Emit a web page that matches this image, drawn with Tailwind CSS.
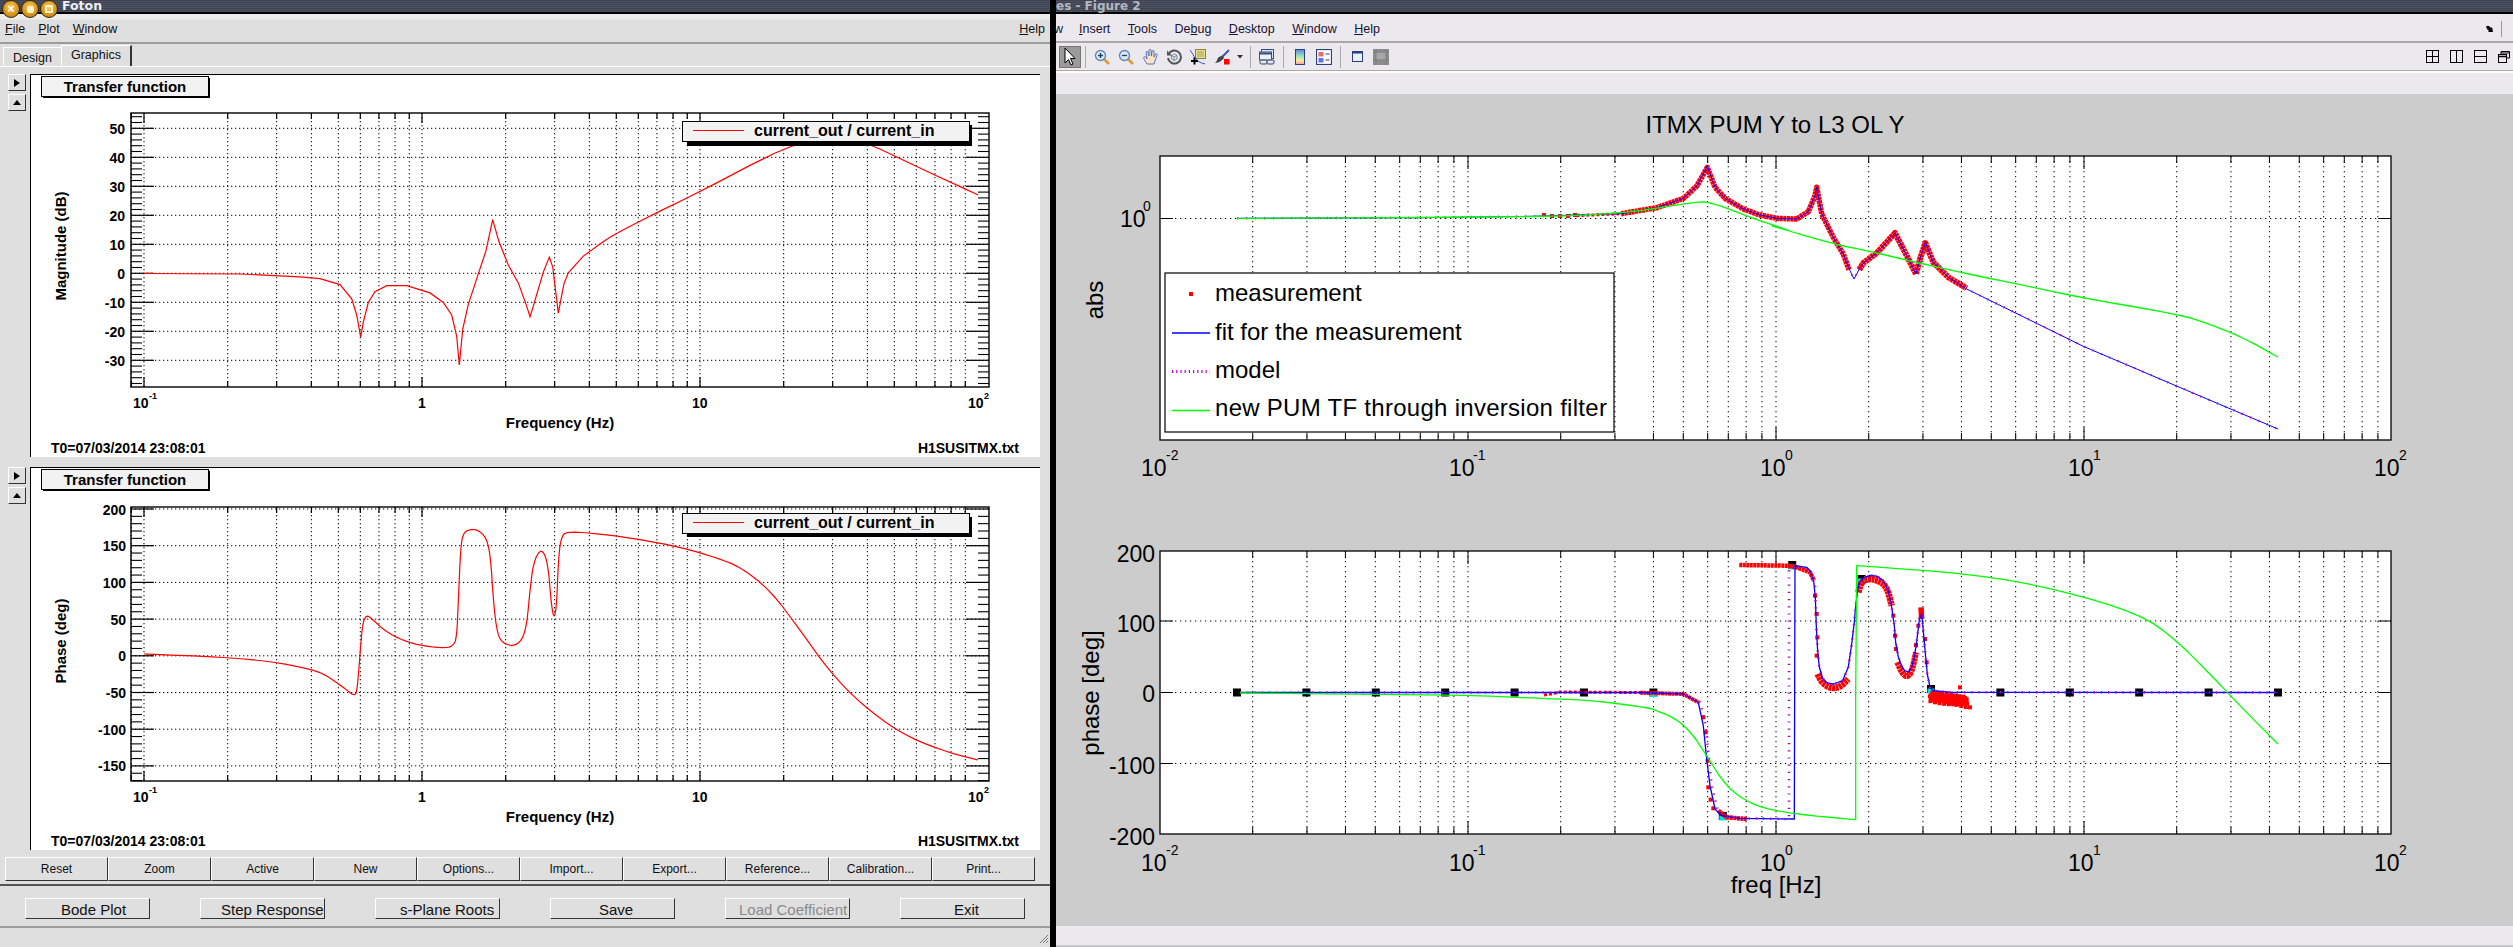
<!DOCTYPE html>
<html lang="en">
<head>
<meta charset="UTF-8">
<title>Foton and Figure 2</title>
<script src="https://cdn.jsdelivr.net/npm/@tailwindcss/browser@4"></script>
</head>
<body class="w-[2513px] h-[947px] overflow-hidden flex bg-black font-['Liberation_Sans',sans-serif] text-[#111]">

<!-- Foton window -->
<div class="w-[1050px] h-[947px] flex flex-col bg-[#dfdfdf] shrink-0">
  <div class="h-[14px] shrink-0 border-b-2 border-black bg-[image:repeating-linear-gradient(0deg,#4d5262_0,#4d5262_1px,#3f4351_1px,#3f4351_2px)] flex items-start relative z-10">
    <div class="flex pl-[2px] gap-[1px]">
      <div class="w-[18px] h-[18px] rounded-full border border-[#3a2a00] bg-[radial-gradient(circle_at_50%_40%,#ffd060,#c98410_75%)] flex items-center justify-center text-white text-[12px] font-bold leading-none">×</div>
      <div class="w-[18px] h-[18px] rounded-full border border-[#3a2a00] bg-[radial-gradient(circle_at_50%_40%,#ffd060,#c98410_75%)] flex items-center justify-center"><div class="w-[7px] h-[7px] bg-[#fff1c8] rounded-[2px]"></div></div>
      <div class="w-[18px] h-[18px] rounded-full border border-[#3a2a00] bg-[radial-gradient(circle_at_50%_40%,#ffd060,#c98410_75%)] flex items-center justify-center"><div class="w-[8px] h-[8px] border-2 border-[#fff1c8]"></div></div>
    </div>
    <span class="ml-[4px] text-[12.5px] leading-[12px] font-bold text-[#eef0f4] font-['DejaVu_Sans',sans-serif]">Foton</span>
  </div>
  <div class="h-[30px] shrink-0 flex items-end justify-between border-b-2 border-[#9c9c9c] bg-[linear-gradient(#ececec_0,#ececec_5px,#dfdfdf_6px)] px-[5px] pb-[3px] text-[12.5px] leading-[20px]">
    <div class="flex gap-[13px]">
      <span><span class="underline">F</span>ile</span>
      <span><span class="underline">P</span>lot</span>
      <span><span class="underline">W</span>indow</span>
    </div>
    <span><span class="underline">H</span>elp</span>
  </div>
  <div class="h-[22px] shrink-0 flex items-end pl-[3px] text-[12.5px]">
    <div class="w-[58px] h-[19px] border-t border-l border-white flex items-center justify-center pt-[2px]">Design</div>
    <div class="w-[71px] h-[21px] border-t border-l border-white border-r-2 border-r-[#333] flex items-center justify-center pb-[2px]">Graphics</div>
  </div>
  <div class="h-[820px] shrink-0 border-t border-white pt-[7px] border-b-2 border-b-[#555]">
    <!-- magnitude pad -->
    <div class="flex h-[383px]">
      <div class="w-[30px] pl-[8px] flex flex-col gap-[3px]">
        <div class="w-[18px] h-[17px] border border-t-white border-l-white border-r-[#333] border-b-[#333] flex items-center justify-center"><svg width="6" height="8"><polygon points="0,0 6,4 0,8" fill="#000"/></svg></div>
        <div class="w-[18px] h-[17px] border border-t-white border-l-white border-r-[#333] border-b-[#333] flex items-center justify-center"><svg width="8" height="6"><polygon points="0,5 8,5 4,0" fill="#000"/></svg></div>
      </div>
      <svg viewBox="30 74 1010 383" class="w-[1010px] h-[383px] block bg-white">
        <g id="gridMag"></g>
        <polyline id="curveMag" fill="none" stroke="#ff0000" stroke-width="1.2"/>
        <polyline points="30,457 30,74 1040,74" fill="none" stroke="#000" stroke-width="2"/>
        <rect x="43" y="78" width="167" height="20" fill="#000"/>
        <rect x="41.5" y="76.5" width="167" height="20" fill="#f2f2f2" stroke="#000"/>
        <g class="text-[15px] font-bold">
          <text x="125" y="92" text-anchor="middle">Transfer function</text>
          <g class="text-[14px]" text-anchor="end">
            <text x="125" y="134">50</text>
            <text x="125" y="163">40</text>
            <text x="125" y="192">30</text>
            <text x="125" y="221">20</text>
            <text x="125" y="250">10</text>
            <text x="125" y="279">0</text>
            <text x="125" y="308">-10</text>
            <text x="125" y="337">-20</text>
            <text x="125" y="366">-30</text>
          </g>
          <g class="text-[14px]">
            <text x="133" y="408">10</text><text x="149" y="399" class="text-[9px]">-1</text>
            <text x="418" y="408">1</text>
            <text x="692" y="408">10</text>
            <text x="968" y="408">10</text><text x="984" y="399" class="text-[9px]">2</text>
          </g>
          <text x="560" y="428" text-anchor="middle">Frequency (Hz)</text>
          <text x="66" y="246" text-anchor="middle" transform="rotate(-90 66 246)">Magnitude (dB)</text>
          <text x="51" y="453" class="text-[14px]">T0=07/03/2014 23:08:01</text>
          <text x="1019" y="453" text-anchor="end" class="text-[14px]">H1SUSITMX.txt</text>
        </g>
        <rect x="687" y="125" width="285" height="21" fill="#000"/>
        <rect x="682.5" y="121.5" width="287" height="20" fill="#f2f2f2" stroke="#000"/>
        <line x1="693" y1="130.5" x2="744" y2="130.5" stroke="#ff0000" stroke-width="1.2"/>
        <text x="754" y="136" class="text-[16px] font-bold">current_out / current_in</text>
      </svg>
    </div>
    <!-- phase pad -->
    <div class="flex h-[383px] mt-[10px]">
      <div class="w-[30px] pl-[8px] flex flex-col gap-[3px]">
        <div class="w-[18px] h-[17px] border border-t-white border-l-white border-r-[#333] border-b-[#333] flex items-center justify-center"><svg width="6" height="8"><polygon points="0,0 6,4 0,8" fill="#000"/></svg></div>
        <div class="w-[18px] h-[17px] border border-t-white border-l-white border-r-[#333] border-b-[#333] flex items-center justify-center"><svg width="8" height="6"><polygon points="0,5 8,5 4,0" fill="#000"/></svg></div>
      </div>
      <svg viewBox="30 467 1010 383" class="w-[1010px] h-[383px] block bg-white">
        <g id="gridPhase"></g>
        <polyline id="curvePhase" fill="none" stroke="#ff0000" stroke-width="1.2"/>
        <polyline points="30,850 30,467 1040,467" fill="none" stroke="#000" stroke-width="2"/>
        <rect x="43" y="471" width="167" height="20" fill="#000"/>
        <rect x="41.5" y="469.5" width="167" height="20" fill="#f2f2f2" stroke="#000"/>
        <g class="text-[15px] font-bold">
          <text x="125" y="485" text-anchor="middle">Transfer function</text>
          <g class="text-[14px]" text-anchor="end">
            <text x="126" y="515">200</text>
            <text x="126" y="551">150</text>
            <text x="126" y="588">100</text>
            <text x="126" y="625">50</text>
            <text x="126" y="661">0</text>
            <text x="126" y="698">-50</text>
            <text x="126" y="735">-100</text>
            <text x="126" y="771">-150</text>
          </g>
          <g class="text-[14px]">
            <text x="133" y="802">10</text><text x="149" y="793" class="text-[9px]">-1</text>
            <text x="418" y="802">1</text>
            <text x="692" y="802">10</text>
            <text x="968" y="802">10</text><text x="984" y="793" class="text-[9px]">2</text>
          </g>
          <text x="560" y="822" text-anchor="middle">Frequency (Hz)</text>
          <text x="66" y="641" text-anchor="middle" transform="rotate(-90 66 641)">Phase (deg)</text>
          <text x="51" y="846" class="text-[14px]">T0=07/03/2014 23:08:01</text>
          <text x="1019" y="846" text-anchor="end" class="text-[14px]">H1SUSITMX.txt</text>
        </g>
        <rect x="687" y="517" width="285" height="20" fill="#000"/>
        <rect x="682.5" y="513.5" width="287" height="20" fill="#f2f2f2" stroke="#000"/>
        <line x1="693" y1="522.5" x2="744" y2="522.5" stroke="#ff0000" stroke-width="1.2"/>
        <text x="754" y="528" class="text-[16px] font-bold">current_out / current_in</text>
      </svg>
    </div>
    <div class="mt-[7px] pl-[5px] flex h-[24px] text-[12px]">
      <button class="w-[103px] border border-t-white border-l-white border-r-[#333] border-b-[#333]">Reset</button>
      <button class="w-[103px] border border-t-white border-l-white border-r-[#333] border-b-[#333]">Zoom</button>
      <button class="w-[103px] border border-t-white border-l-white border-r-[#333] border-b-[#333]">Active</button>
      <button class="w-[103px] border border-t-white border-l-white border-r-[#333] border-b-[#333]">New</button>
      <button class="w-[103px] border border-t-white border-l-white border-r-[#333] border-b-[#333]">Options...</button>
      <button class="w-[103px] border border-t-white border-l-white border-r-[#333] border-b-[#333]">Import...</button>
      <button class="w-[103px] border border-t-white border-l-white border-r-[#333] border-b-[#333]">Export...</button>
      <button class="w-[103px] border border-t-white border-l-white border-r-[#333] border-b-[#333]">Reference...</button>
      <button class="w-[103px] border border-t-white border-l-white border-r-[#333] border-b-[#333]">Calibration...</button>
      <button class="w-[103px] border border-t-white border-l-white border-r-[#333] border-b-[#333]">Print...</button>
    </div>
  </div>
  <div class="h-[40px] shrink-0 pt-[12px] pl-[25px] flex gap-[50px] text-[15px]">
    <button class="w-[125px] h-[21px] whitespace-nowrap text-left pl-[35px] border border-t-white border-l-white border-r-[#333] border-b-[#333]">Bode Plot</button>
    <button class="w-[125px] h-[21px] whitespace-nowrap text-left pl-[20px] border border-t-white border-l-white border-r-[#333] border-b-[#333]">Step Response</button>
    <button class="w-[125px] h-[21px] whitespace-nowrap text-left pl-[24px] border border-t-white border-l-white border-r-[#333] border-b-[#333]">s-Plane Roots</button>
    <button class="w-[125px] h-[21px] whitespace-nowrap text-left pl-[48px] border border-t-white border-l-white border-r-[#333] border-b-[#333]">Save</button>
    <button class="w-[125px] h-[21px] whitespace-nowrap text-left pl-[13px] text-[#8a8a8a] border border-t-white border-l-white border-r-[#333] border-b-[#333]">Load Coefficient</button>
    <button class="w-[125px] h-[21px] whitespace-nowrap text-left pl-[53px] border border-t-white border-l-white border-r-[#333] border-b-[#333]">Exit</button>
  </div>
  <div class="h-[21px] shrink-0 border-t-2 border-[#9c9c9c] flex justify-end items-end pr-[2px] pb-[4px]">
    <svg width="9" height="9" stroke="#777"><path d="M1 9L9 1M4 9L9 4M7 9L9 7"/></svg>
  </div>
</div>

<!-- Figure 2 window -->
<div class="ml-[6px] w-[1457px] h-[947px] flex flex-col bg-[#ebe9ed]">
  <div class="h-[14px] shrink-0 border-b-2 border-black bg-[image:repeating-linear-gradient(0deg,#4d5262_0,#4d5262_1px,#3f4351_1px,#3f4351_2px)]">
    <span class="block text-[12px] leading-[12px] font-bold text-[#b4b8c0] font-['DejaVu_Sans',sans-serif]">es - Figure 2</span>
  </div>
  <div class="h-[29px] shrink-0 flex items-center justify-between border-b-2 border-[#a8a8a8] text-[12.5px] text-[#1a1030] pt-[3px]">
    <div class="flex gap-[17.5px]">
      <span class="ml-[-2px] mr-[-1.5px]">w</span>
      <span><span class="underline">I</span>nsert</span>
      <span><span class="underline">T</span>ools</span>
      <span>De<span class="underline">b</span>ug</span>
      <span><span class="underline">D</span>esktop</span>
      <span><span class="underline">W</span>indow</span>
      <span><span class="underline">H</span>elp</span>
    </div>
    <div class="flex items-center gap-[7px] pr-[1px]">
      <svg width="8" height="8" fill="#000"><path d="M0 1h3l2 2 1-1 1 5H2l1-1-2-2z"/></svg>
      <div class="w-[1px] h-[16px] bg-[#999]"></div>
      <div class="w-[3px]"></div>
    </div>
  </div>
  <div class="h-[28px] shrink-0 flex items-center justify-between border-b border-[#a8a8a8]">
    <div class="flex items-center pl-[3px]">
      <div class="w-[22px] h-[22px] bg-[#9a9a9a] border border-[#777] flex items-center justify-center">
        <svg width="14" height="20" viewBox="0 0 14 20"><path d="M2 1v15l3.5-3.5L8 18l2-1-2.5-5.5H12z" fill="#fff" stroke="#000"/></svg>
      </div>
      <div class="w-[1px] h-[22px] bg-[#aaa] ml-[4px] mr-[8px]"></div>
      <div class="flex items-center gap-2">
        <svg width="16" height="16" viewBox="0 0 16 16"><path d="M10 10l5 5" stroke="#d99c3a" stroke-width="2.6"/><circle cx="6.5" cy="6.5" r="5" fill="#d8e8f6" stroke="#5f83ad" stroke-width="1.3"/><path d="M4 6.5h5M6.5 4v5" stroke="#1d3f77" stroke-width="1.3"/></svg>
        <svg width="16" height="16" viewBox="0 0 16 16"><path d="M10 10l5 5" stroke="#d99c3a" stroke-width="2.6"/><circle cx="6.5" cy="6.5" r="5" fill="#d8e8f6" stroke="#5f83ad" stroke-width="1.3"/><path d="M4 6.5h5" stroke="#1d3f77" stroke-width="1.3"/></svg>
        <svg width="16" height="17" viewBox="0 0 16 17"><path d="M5 16C3 13 1 10 2 9c1-1 2 0 3 2L4 4.500C4 3 6 3 6 4.500L7 8 7 2.500C7 1 9 1 9 2.500L9.500 8 10 3.500C10 2 12 2 12 3.500L12 9 13.500 6C14.500 5 15.500 6 15 7.500L13 13l-1 3z" fill="#fae0c6" stroke="#4668b8" stroke-width="0.9"/></svg>
        <svg width="16" height="16" viewBox="0 0 16 16"><path d="M3 4.500A6.500 6.500 0 1 1 2 9" fill="none" stroke="#555" stroke-width="2"/><path d="M1 1.500v5h5z" fill="#555"/><path d="M5.500 6.500l3-1.500 2.500 1.500v3.500l-3 1.500-2.500-1.500zM8 8v3.500M5.500 6.500L8 8l3-1.500" fill="#e8eef8" stroke="#5a7090" stroke-width="0.8"/></svg>
        <svg width="16" height="16" viewBox="0 0 16 16"><path d="M0 1C4 6 5 13 15 15" fill="none" stroke="#2a3fc0" stroke-width="0.9"/><rect x="5.500" y="0.500" width="10" height="9" fill="#e6de8a" stroke="#8a8244"/><path d="M7 3h7M7 5h7M7 7h7" stroke="#a89f55"/><path d="M4.500 8.500v7M1 12h7" stroke="#000" stroke-width="2"/></svg>
        <svg width="16" height="16" viewBox="0 0 16 16"><path d="M15 1L8 8" stroke="#3f52c8" stroke-width="2"/><path d="M8 6.500l2 2C9 11 5 14 1 14c1.500-1 2-3 3-5 1-1.500 3-2 4-2.500z" fill="#444"/><rect x="10" y="10" width="5.500" height="5.500" fill="#ff0000"/></svg>
      </div>
      <svg width="6" height="4" class="ml-[7px]"><polygon points="0,0 6,0 3,3.500" fill="#333"/></svg>
      <div class="w-[1px] h-[22px] bg-[#aaa] ml-[7px] mr-[8px]"></div>
      <svg width="16" height="16" viewBox="0 0 16 16"><rect x="2.500" y="0.500" width="12" height="9" fill="#dfe4f2" stroke="#34507f"/><rect x="0.500" y="3" width="12" height="8" fill="#eef0f8" stroke="#34507f"/><path d="M1 4.500h11" stroke="#34507f" stroke-width="2"/><rect x="1" y="11" width="7" height="4" rx="2" fill="none" stroke="#6c7a94" stroke-width="1.4"/><rect x="8" y="11" width="7" height="4" rx="2" fill="none" stroke="#6c7a94" stroke-width="1.4"/></svg>
      <div class="w-[1px] h-[22px] bg-[#aaa] ml-[8px] mr-[11px]"></div>
      <svg width="10" height="16" viewBox="0 0 10 16"><defs><linearGradient id="cbar" x1="0" y1="0" x2="0" y2="1"><stop offset="0" stop-color="#5f86dc"/><stop offset="0.4" stop-color="#8fdcc0"/><stop offset="0.7" stop-color="#f4ee9a"/><stop offset="1" stop-color="#f0a0a8"/></linearGradient></defs><rect x="0.500" y="0.500" width="9" height="15" fill="url(#cbar)" stroke="#2b3f80"/></svg>
      <svg width="16" height="16" viewBox="0 0 16 16" class="ml-[11px]"><rect x="0.500" y="0.500" width="15" height="15" fill="#fff" stroke="#2b3f80" stroke-width="1.2"/><rect x="2.500" y="3" width="5" height="4.500" fill="#e86a6a"/><rect x="2.500" y="9" width="5" height="4.500" fill="#6470e4"/><path d="M9.500 5h4M9.500 11h4" stroke="#2b3f80" stroke-width="1.2"/></svg>
      <div class="w-[1px] h-[22px] bg-[#aaa] ml-[8px] mr-[11px]"></div>
      <svg width="11" height="11" viewBox="0 0 11 11"><rect x="0.500" y="0.500" width="10" height="10" fill="#eaf0fa" stroke="#2b3f80"/><path d="M0 1.500h11" stroke="#2b3f80" stroke-width="2"/></svg>
      <svg width="16" height="16" viewBox="0 0 16 16" class="ml-[10px]"><rect x="0" y="0" width="16" height="16" fill="#8c8c8c"/><rect x="3" y="3" width="10" height="8" fill="#a6a6a6"/><path d="M0 3h16M0 11h16M3 0v16M13 0v16" stroke="#7c7c7c"/></svg>
    </div>
    <div class="flex items-center gap-[11px] pr-[3px]">
      <svg width="13" height="13" fill="none" stroke="#000"><rect x="0.500" y="0.500" width="12" height="12"/><path d="M6.500 0v13M0 6.500h13"/></svg>
      <svg width="13" height="13" fill="none" stroke="#000"><rect x="0.500" y="0.500" width="12" height="12"/><path d="M6.500 0v13"/></svg>
      <svg width="13" height="13" fill="none" stroke="#000"><rect x="0.500" y="0.500" width="12" height="12"/><path d="M0 6.500h13"/></svg>
      <svg width="12" height="12" fill="none" stroke="#000"><path d="M3 3V.5h8.500V7H9" /><path d="M3 2h8" /><rect x="0.500" y="3.500" width="8" height="8"/><path d="M0 5.500h9" stroke-width="1.500"/></svg>
    </div>
  </div>
  <div class="h-[2px] shrink-0 bg-white border-b border-[#fff]"></div>
  <div class="h-[21px] shrink-0"></div>
  <svg viewBox="1056 95 1457 832" class="w-[1457px] h-[832px] block shrink-0 bg-[#cccccc]">
    <rect x="1160" y="157" width="1231" height="284" fill="#fff"/>
    <rect x="1160" y="552" width="1231" height="283" fill="#fff"/>
    <g id="gridFig"></g>
    <g id="squares"></g>
    <g id="curvesFig"></g>
    <g fill="none" stroke="#000" stroke-width="1.300">
      <rect x="1160" y="157" width="1231" height="284"/>
      <rect x="1160" y="552" width="1231" height="283"/>
    </g>
    <rect x="1165" y="274" width="449" height="159" fill="#fff" stroke="#000" stroke-width="1.200"/>
    <rect x="1189" y="293" width="4" height="4" fill="#ff0000"/>
    <line x1="1172" y1="334" x2="1210" y2="334" stroke="#0000ff" stroke-width="1.300"/>
    <line x1="1172" y1="372.500" x2="1210" y2="372.500" stroke="#c000c0" stroke-width="3" stroke-dasharray="1.200 3"/>
    <line x1="1172" y1="411.500" x2="1210" y2="411.500" stroke="#00ff00" stroke-width="1.300"/>
    <g class="text-[24px]">
      <text x="1215" y="302">measurement</text>
      <text x="1215" y="341">fit for the measurement</text>
      <text x="1215" y="379">model</text>
      <text x="1215" y="417" class="tracking-[0.28px]">new PUM TF through inversion filter</text>
      <text x="1775" y="134" text-anchor="middle">ITMX PUM Y to L3 OL Y</text>
      <text x="1776" y="894" text-anchor="middle">freq [Hz]</text>
      <text x="1103" y="301" text-anchor="middle" transform="rotate(-90 1103 301)">abs</text>
      <text x="1099" y="694" text-anchor="middle" transform="rotate(-90 1099 694)">phase [deg]</text>
      <g class="text-[23px]">
        <g text-anchor="end">
          <text x="1155" y="563">200</text>
          <text x="1155" y="633">100</text>
          <text x="1155" y="703">0</text>
          <text x="1155" y="775">-100</text>
          <text x="1155" y="846">-200</text>
        </g>
        <text x="1120" y="228">10</text><text x="1143" y="212" class="text-[14px]">0</text>
        <text x="1141" y="477">10</text><text x="1166" y="461" class="text-[14px]">-2</text>
        <text x="1449" y="477">10</text><text x="1473" y="461" class="text-[14px]">-1</text>
        <text x="1760" y="477">10</text><text x="1785" y="461" class="text-[14px]">0</text>
        <text x="2068" y="477">10</text><text x="2093" y="461" class="text-[14px]">1</text>
        <text x="2374" y="477">10</text><text x="2399" y="461" class="text-[14px]">2</text>
        <text x="1141" y="872">10</text><text x="1166" y="856" class="text-[14px]">-2</text>
        <text x="1449" y="872">10</text><text x="1473" y="856" class="text-[14px]">-1</text>
        <text x="1760" y="872">10</text><text x="1785" y="856" class="text-[14px]">0</text>
        <text x="2068" y="872">10</text><text x="2093" y="856" class="text-[14px]">1</text>
        <text x="2374" y="872">10</text><text x="2399" y="856" class="text-[14px]">2</text>
      </g>
    </g>
  </svg>
  <div class="flex-1 border-b-2 border-[#c8c8c8]"></div>
</div>

<script>
const NS = 'http://www.w3.org/2000/svg';

function add(parent, tag, attrs) {
  const el = document.createElementNS(NS, tag);
  for (const k in attrs) el.setAttribute(k, attrs[k]);
  parent.appendChild(el);
  return el;
}
function ln(g, x1, y1, x2, y2, extra) {
  add(g, 'line', Object.assign({ x1, y1, x2, y2, stroke: '#000', 'stroke-width': 1 }, extra || {}));
}
const toPts = a => a.map(p => p[0].toFixed(1) + ',' + p[1].toFixed(1)).join(' ');
function poly(g, pts, stroke, width, extra) {
  add(g, 'polyline', Object.assign({
    points: toPts(pts), fill: 'none', stroke, 'stroke-width': width, 'stroke-linejoin': 'round'
  }, extra || {}));
}
// corner cutting, the traced points are coarse
function smooth(p, n) {
  for (; n > 0; n--) {
    const o = [p[0]];
    for (let i = 0; i < p.length - 1; i++) {
      o.push([0.75 * p[i][0] + 0.25 * p[i + 1][0], 0.75 * p[i][1] + 0.25 * p[i + 1][1]]);
      o.push([0.25 * p[i][0] + 0.75 * p[i + 1][0], 0.25 * p[i][1] + 0.75 * p[i + 1][1]]);
    }
    o.push(p[p.length - 1]);
    p = o;
  }
  return p;
}
const DOT = { 'stroke-dasharray': '1.3 2.7' };

// Foton pads: log x axis with ticks on both sides
function fotonGrid(g, top, bottom, yTop, yStep, yCount) {
  const L = 131, R = 989;
  add(g, 'rect', { x: L, y: top, width: R - L, height: bottom - top, fill: 'none', stroke: '#000', 'stroke-width': 1.4 });
  for (let d = -2; d < 2; d++) {
    for (let m = 1; m < 10; m++) {
      const x = 144 + 278 * (d + 1 + Math.log10(m));
      if (x < L || x > R) continue;
      ln(g, x, top, x, bottom, DOT);
      const len = m === 1 ? 10 : 6;
      ln(g, x, top, x, top + len, { 'stroke-width': 1.2 });
      ln(g, x, bottom, x, bottom - len, { 'stroke-width': 1.2 });
    }
  }
  for (let i = -1; i < yCount + 1; i++) {
    const y = yTop + i * yStep;
    if (y > top && y < bottom) {
      ln(g, L, y, R, y, DOT);
      ln(g, L, y, L + 23, y, { 'stroke-width': 1.2 });
      ln(g, R, y, R - 23, y, { 'stroke-width': 1.2 });
    }
    for (let k = 1; k < 5; k++) {
      const ym = y + k * yStep / 5;
      if (ym <= top || ym >= bottom) continue;
      ln(g, L, ym, L + 11, ym, { 'stroke-width': 1.1 });
      ln(g, R, ym, R - 11, ym, { 'stroke-width': 1.1 });
    }
  }
}
fotonGrid(document.getElementById('gridMag'), 113, 387, 128.3, 29, 9);
fotonGrid(document.getElementById('gridPhase'), 507, 781, 509, 36.7, 8);

const z12 = a => a.map(p => [300 + p[0] / 3, 190 + p[1] / 2.8]);
const z11 = a => a.map(p => [600 + p[0] / 3, 90 + p[1] / 3]);

document.getElementById('curveMag').setAttribute('points', toPts([[144, 273.5], [240, 274]].concat(
  z12([[0,243],[60,248],[120,265],[155,305],[170,350],[182,412],[190,370],[205,315],[225,285],[260,268],[320,268],[390,288],[430,315],[455,350],[470,410],[478,490],[488,390],[505,320],[535,235],[558,170],[578,83],[597,145],[625,210],[655,260],[680,325],[690,355],[700,325],[730,230],[748,188],[758,215],[775,345],[792,262],[805,232],[850,185]]),
  smooth(z11([[0,462],[40,435],[150,378],[300,305],[500,200],[595,160],[700,130],[805,160],[950,230],[1135,315]]), 1)
)));
document.getElementById('curvePhase').setAttribute('points', toPts(smooth([[144, 654], [200, 656], [260, 660]].concat(
  z12([[0,1335],[60,1350],[100,1372],[140,1400],[165,1418],[172,1395],[180,1300],[188,1210],[200,1190],[215,1200],[255,1235],[310,1262],[370,1277],[440,1283],[460,1275],[470,1255],[475,1150],[482,1000],[490,960],[510,950],[535,952],[560,975],[572,1030],[580,1150],[592,1245],[610,1270],[640,1277],[665,1262],[680,1220],[690,1120],[700,1045],[720,1007],[735,1020],[745,1060],[755,1170],[763,1200],[770,1160],[776,1020],[785,970],[800,957],[870,960],[1000,975],[1150,1002],[1250,1030],[1320,1055]]),
  [[770,590],[800,630],[830,672],[860,703],[900,733],[940,750],[978,760]]
), 2)));

// Figure axes
const gf = document.getElementById('gridFig');
[[157, 441], [552, 835]].forEach(([top, bottom]) => {
  for (let d = -2; d < 2; d++) {
    for (let m = 1; m < 10; m++) {
      const x = 1160 + 308 * (d + 2 + Math.log10(m));
      if (m === 1 && d === -2) continue;
      ln(gf, x, top, x, bottom, { 'stroke-dasharray': '1.3 3.7' });
      const len = m === 1 ? 13 : 7;
      ln(gf, x, top, x, top + len);
      ln(gf, x, bottom, x, bottom - len);
    }
  }
});
[219.5, 622, 693.5, 764.5].forEach(y => {
  ln(gf, 1160, y, 2391, y, { 'stroke-dasharray': '1.3 3.7' });
  ln(gf, 1160, y, 1173, y);
  ln(gf, 2391, y, 2378, y);
});

const sq = document.getElementById('squares');
for (let i = 0; i < 16; i++) {
  const x = 1237 + i * 69.4;
  let y = 693.5, cyan = false;
  if (i === 6) cyan = true;
  if (i === 7) { y = 817; cyan = true; }
  if (i === 8) { y = 566; cyan = true; }
  if (i === 9) { y = 580; cyan = true; }
  if (i === 10) { y = 690; cyan = true; }
  add(sq, 'rect', { x: x - 4, y: y - 4, width: 8, height: 8, fill: '#000' });
  if (cyan) add(sq, 'rect', { x: x - 3.5, y: y - 0.5, width: 7, height: 5, fill: '#00e0e0' });
}

const z7 = a => a.map(p => [1130 + p[0] / 2.24, 130 + p[1] / 3]);
const z8 = a => a.map(p => [1700 + p[0] / 3, 140 + p[1] / 3]);
const z9 = a => a.map(p => [1640 + p[0] / 3, 540 + p[1] / 3]);
const cf = document.getElementById('curvesFig');
const RED = { 'stroke-dasharray': '3 0.5' };
const MAG = { 'stroke-dasharray': '1 8' };
const redDot = p => add(cf, 'rect', { x: p[0] - 2, y: p[1] - 2, width: 4, height: 4, fill: '#ff0000' });

// upper axes: measurement, fit, model, inversion filter
const absTail = [[2083.3, 347.3], [2200, 397], [2278, 430]];
const absFit = z7([[240,268],[650,266],[900,262],[1100,254],[1180,236],[1240,208],[1270,170]]).concat(
  z8([[22,80],[45,145],[75,178],[130,210],[180,228],[230,238],[290,240],[325,218],[345,170],[350,145],[365,225],[400,295],[430,345],[450,395],[462,420],[478,390],[490,372],[530,342],[585,282],[620,350],[648,405],[660,360],[676,310],[700,370],[745,415],[800,450]]),
  absTail
);
poly(cf, z7([[1000,260],[1100,254]]), '#ff0000', 3, { 'stroke-dasharray': '3 2' });
poly(cf, z7([[1100,254],[1180,236],[1240,208],[1270,170]]).concat(z8([[22,85],[45,145],[75,178],[130,210],[180,228],[230,238],[290,240],[325,218],[345,170],[350,145],[365,225],[400,295],[430,345],[447,392]])), '#ff0000', 5.5, RED);
poly(cf, z8([[478,392],[490,372],[530,342],[585,282],[620,350],[648,405],[660,360],[676,312],[700,370],[745,415],[800,448]]), '#ff0000', 6, RED);
[[1544,216],[1552,217],[1560,217],[1568,217],[1575,216]].forEach(redDot);
poly(cf, absFit, '#0000ff', 1);
poly(cf, absFit, '#c000c0', 2.4, MAG);
poly(cf, smooth(z7([[240,268],[900,264],[1100,254],[1240,225],[1270,219],[1300,219],[1400,270],[1500,315]]).concat(
  z8([[180,250],[400,315],[500,335],[650,370],[780,400],[1000,445],[1150,477],[1427,525],[1500,545]]),
  [[2240, 337], [2278, 358]]
), 2), '#00ff00', 1.3);

// lower axes
const fitLow = [[1240, 693.5], [1640, 693.5]];
const phaseUp = [[510,95],[525,140],[530,300],[540,410],[570,440],[620,420],[640,280],[650,170],[660,120],[700,105],[740,130],[760,230],[770,340],[790,395],[810,400],[825,350],[843,200],[852,300],[865,440],[885,460],[1080,460]];
poly(cf, [[1544, 696], [1551, 695], [1560, 693], [1640, 693.5]], '#ff0000', 3, { 'stroke-dasharray': '3 2' });
poly(cf, z9([[0,461],[130,465],[175,490]]), '#ff0000', 4, RED);
poly(cf, z9([[298,78],[445,80],[470,85],[510,100],[522,125]]), '#ff0000', 4.5, RED);
poly(cf, smooth(z9([[533,405],[545,430],[570,448],[600,445],[625,420]]), 2), '#ff0000', 6.5, RED);
poly(cf, smooth(z9([[655,160],[665,125],[700,118],[740,140],[755,200]]), 2), '#ff0000', 6.5, RED);
poly(cf, smooth(z9([[772,370],[785,400],[800,415],[815,400],[828,340]]), 2), '#ff0000', 6, RED);
poly(cf, z9([[843,205],[845,240]]), '#ff0000', 5.5);
poly(cf, z9([[235,815],[260,835],[320,840]]), '#ff0000', 4.5, RED);
z9([[190,535],[197,580],[203,665],[205,745],[212,782],[220,808],[525,170],[530,225],[532,295],[530,350],[760,230],[765,290],[768,330],[828,318],[835,260],[855,300],[860,370],[960,445],[990,505]]).forEach(redDot);
for (let i = 0; i < 90; i++) {
  // scatter below the flat part of the fit
  const u = 870 + i * 1.25, v = 472 + 11 * Math.sin(i * 1.7) + 6 * Math.sin(i * 0.6) + i * 0.18;
  redDot(z9([[u, v]])[0]);
}
const fitPhase = fitLow.concat(z9([[130,465],[175,490],[190,560],[200,660],[210,740],[225,810],[245,830],[300,838],[463,840],[465,80],[500,85]]), smooth(z9(phaseUp), 1), [[2278, 693.5]]);
poly(cf, fitPhase, '#0000ff', 1.3);
poly(cf, fitLow.concat(z9([[130,465],[180,490],[197,560],[207,660],[215,740],[232,810],[250,830],[300,838],[447,840],[447,82],[510,92]]), smooth(z9(phaseUp.slice(1)), 1), [[2278, 693.5]]), '#c000c0', 2.6, { 'stroke-dasharray': '1.2 6' });
poly(cf, smooth([[1240, 694], [1465, 696], [1530, 699], [1590, 701], [1650, 709]].concat(
  z9([[50,515],[100,535],[150,575],[200,650],[260,745],[340,800],[460,825],[647,842]])
), 2).concat(z9([[647,460]]), smooth(z9([[650,80],[1000,105],[1250,150],[1500,225]]).concat([[2175,640],[2210,675],[2245,712],[2278,745]]), 2)), '#00ff00', 1.3);
</script>
</body>
</html>
